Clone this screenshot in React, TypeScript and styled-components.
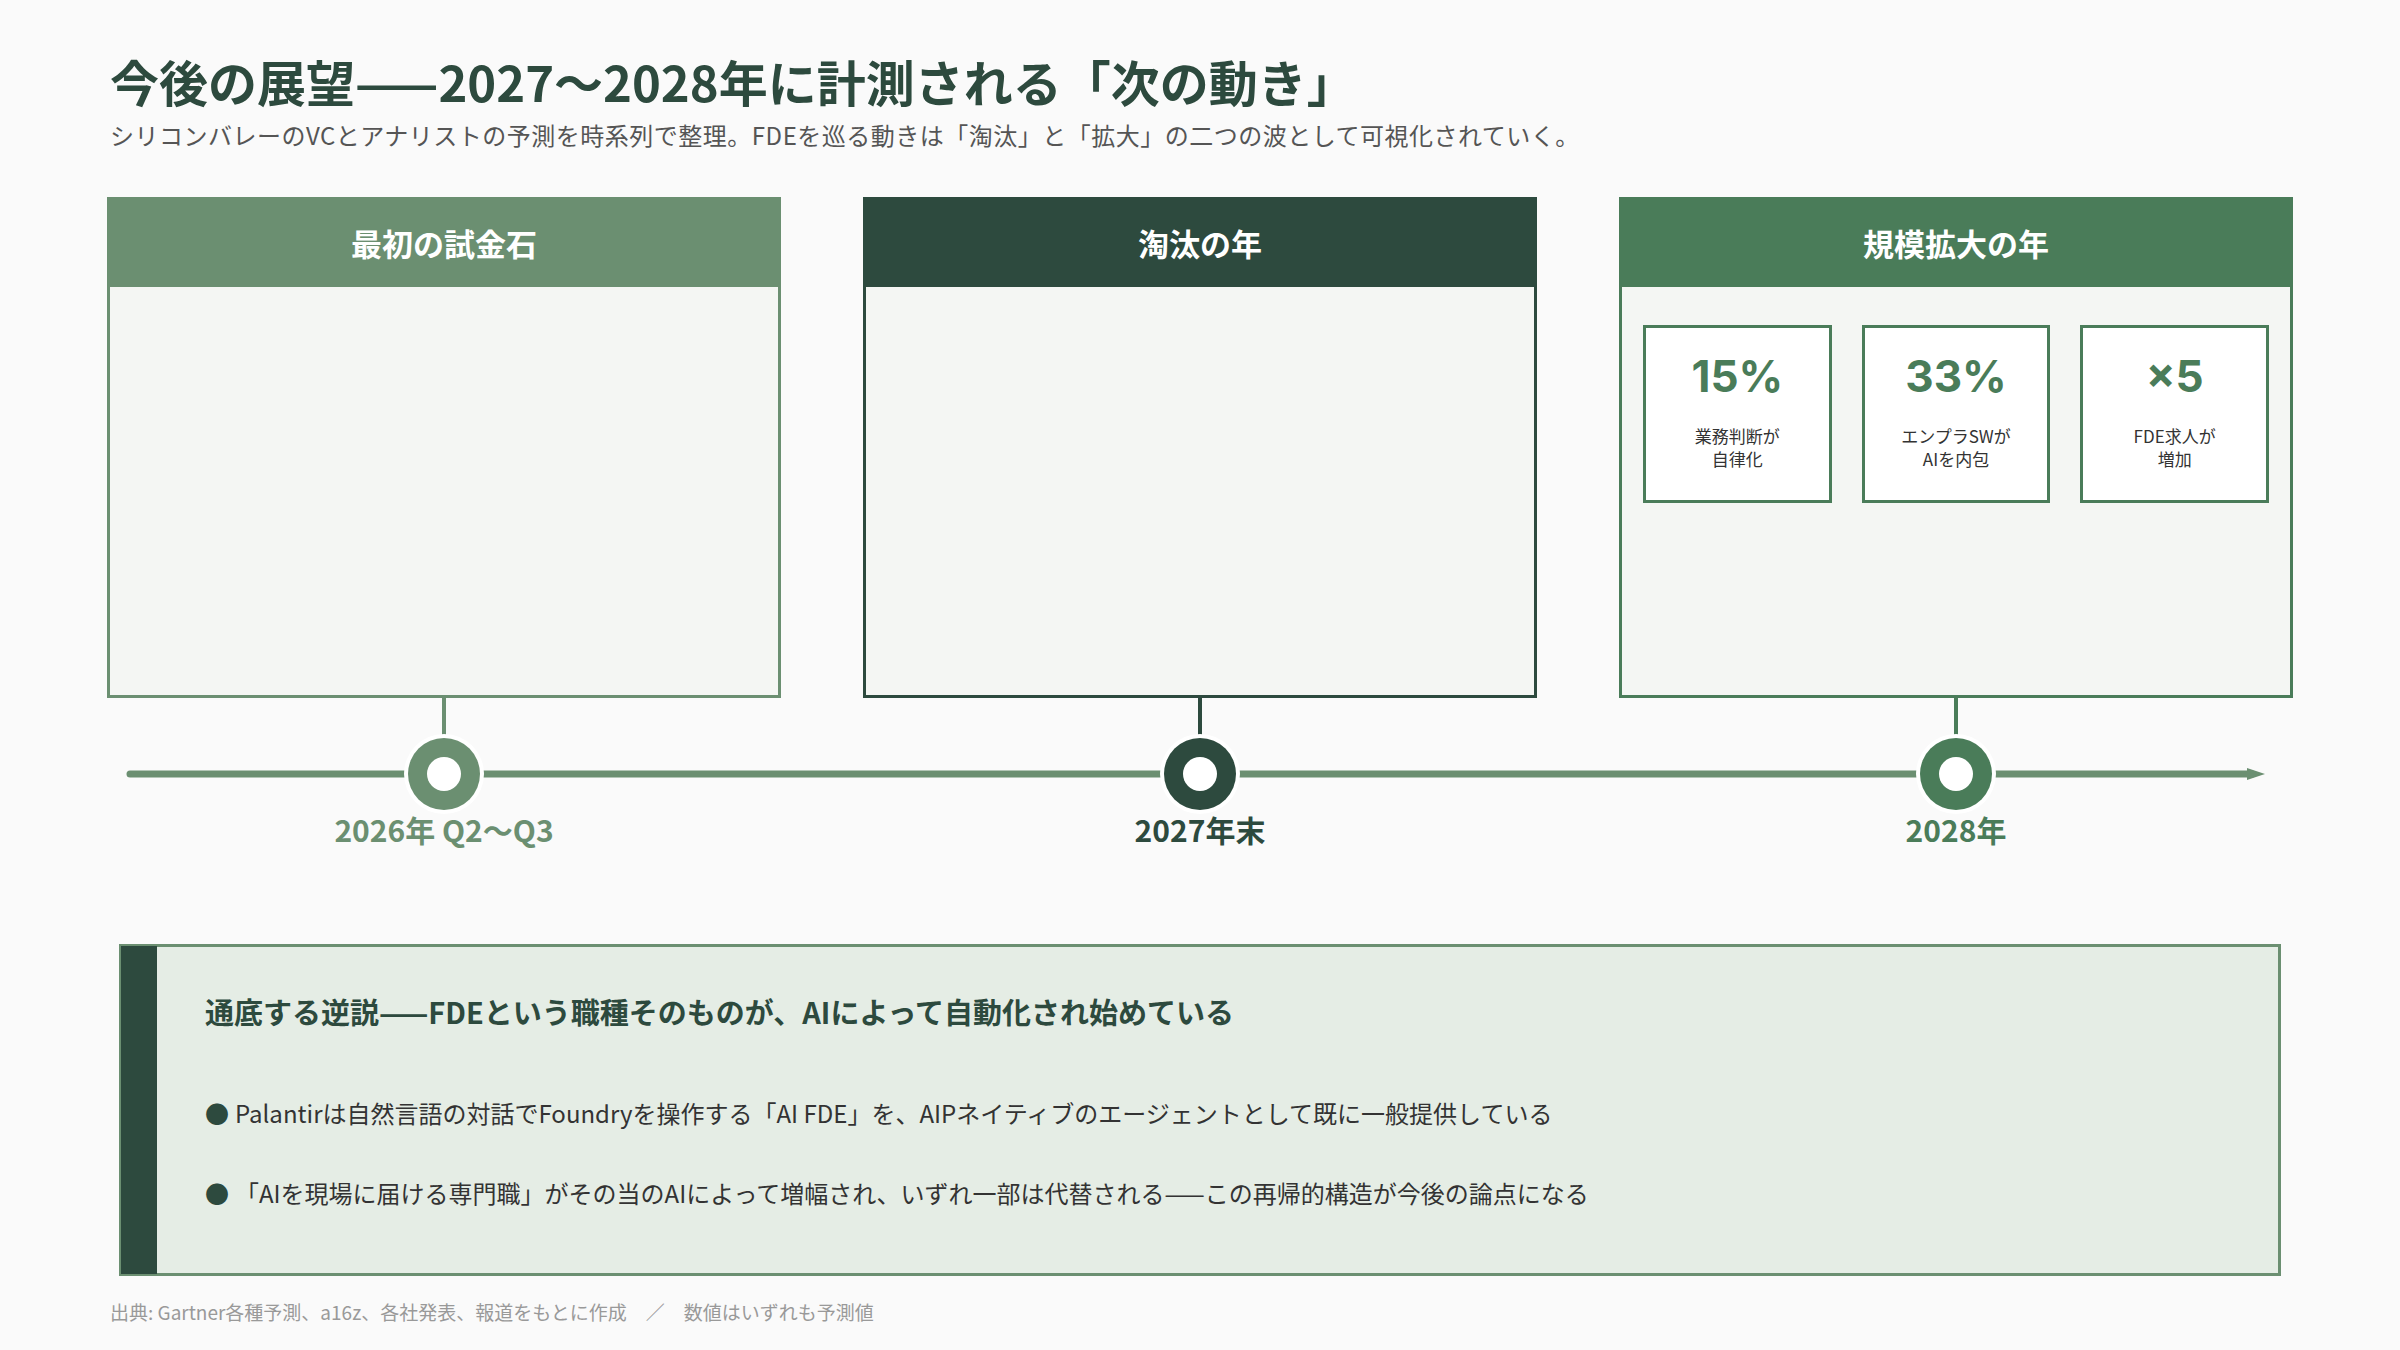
import React from "react";
import styled, { createGlobalStyle } from "styled-components";

const Global = createGlobalStyle`
  html, body { margin: 0; padding: 0; background: #fafafa; }
  body { font-family: "Noto Sans CJK JP", "Noto Sans", sans-serif; }
`;

const Page = styled.div`
  width: 2400px; height: 1350px; box-sizing: border-box;
  padding: 50px 107px 0 107px; display: flex; flex-direction: column;
`;
const Title = styled.h1`
  margin: 0 0 0 3px; font-size: 49px; line-height: 62px; font-weight: 700; color: #2d4a3e; letter-spacing: 0px;
`;
const Sub = styled.p`
  margin: 6px 0 0 3px; font-size: 24px; line-height: 34px; color: #555; letter-spacing: 0.5px;
`;
const Cards = styled.div`
  margin-top: 45px; display: grid; grid-template-columns: repeat(3, 674px); column-gap: 82px;
`;
const Card = styled.div<{ c: string }>`
  height: 501px; border: 3px solid ${p => p.c}; background: #f4f6f3; box-sizing: border-box;
  display: flex; flex-direction: column;
`;
const CardHead = styled.div<{ c: string }>`
  background: ${p => p.c}; height: 90px; margin: -3px -3px 0 -3px; display: flex; align-items: center; justify-content: center;
  color: #fff; font-size: 31px; font-weight: 700;
`;
const Stats = styled.div`
  display: grid; grid-template-columns: repeat(3, 1fr); gap: 30px; padding: 38px 21px 0 21px;
`;
const Stat = styled.div`
  height: 178px; background: #fff; border: 3px solid #4a7c59; box-sizing: border-box;
  display: flex; flex-direction: column; align-items: center; padding-top: 22px;
`;
const StatNum = styled.div`
  font-size: 44px; font-weight: 700; color: #4a7c59; line-height: 52px; font-family: "Inter", "Noto Sans CJK JP", sans-serif;
`;
const StatLabel = styled.div`
  margin-top: 22px; font-size: 17px; line-height: 23px; color: #333; text-align: center;
`;
const Timeline = styled.div`
  position: relative; display: grid; grid-template-columns: repeat(3, 674px); column-gap: 82px;
`;
const Line = styled.svg`
  position: absolute; left: 0; top: 0; width: 2186px; height: 150px; pointer-events: none;
`;
const Col = styled.div`
  position: relative; display: flex; flex-direction: column; align-items: center;
`;
const Stem = styled.div<{ c: string }>`
  width: 4px; height: 40px; background: ${p => p.c};
`;
const Dot = styled.div<{ c: string }>`
  width: 72px; height: 72px; border-radius: 50%; background: ${p => p.c}; box-sizing: border-box;
  box-shadow: 0 0 0 4px #fff; display: flex; align-items: center; justify-content: center;
  &::after { content: ""; width: 34px; height: 34px; border-radius: 50%; background: #fff; }
`;
const DateLabel = styled.div<{ c: string }>`
  margin-top: 0px; font-size: 30px; font-weight: 700; color: ${p => p.c}; line-height: 38px;
`;
const Note = styled.div`
  margin: 96px 12px 0 12px; height: 332px; border: 3px solid #6b8f71; background: #e5ede5; box-sizing: border-box;
  display: flex;
`;
const NoteBar = styled.div`
  width: 36px; background: #2d4a3e; margin: -1px 0 -1px -1px;
`;
const NoteBody = styled.div`
  padding: 44px 0 0 48px; display: flex; flex-direction: column;
`;
const NoteHead = styled.div`
  font-size: 29px; font-weight: 700; color: #2d4a3e; line-height: 40px;
`;
const Bullet = styled.div<{ first?: boolean }>`
  margin-top: ${p => (p.first ? 62 : 40)}px; font-size: 24px; color: #333; line-height: 40px;
  &::before { content: "●"; color: #2d4a3e; margin-right: 6px; }
`;
const Foot = styled.div`
  margin: 22px 0 0 3px; font-size: 19px; color: #999;
`;

const G1 = "#6b8f71", G2 = "#2d4a3e", G3 = "#4a7c59";

export default function App() {
  return (
    <Page>
      <Global />
      <Title>今後の展望——2027〜2028年に計測される「次の動き」</Title>
      <Sub>シリコンバレーのVCとアナリストの予測を時系列で整理。FDEを巡る動きは「淘汰」と「拡大」の二つの波として可視化されていく。</Sub>
      <Cards>
        <Card c={G1}><CardHead c={G1}>最初の試金石</CardHead></Card>
        <Card c={G2}><CardHead c={G2}>淘汰の年</CardHead></Card>
        <Card c={G3}>
          <CardHead c={G3}>規模拡大の年</CardHead>
          <Stats>
            <Stat><StatNum>15%</StatNum><StatLabel>業務判断が<br />自律化</StatLabel></Stat>
            <Stat><StatNum>33%</StatNum><StatLabel>エンプラSWが<br />AIを内包</StatLabel></Stat>
            <Stat><StatNum>×5</StatNum><StatLabel>FDE求人が<br />増加</StatLabel></Stat>
          </Stats>
        </Card>
      </Cards>
      <Timeline>
        <Line viewBox="0 0 2186 150">
          <line x1="23" y1="76" x2="2145" y2="76" stroke={G1} strokeWidth="7" strokeLinecap="round" />
          <polygon points="2140,70 2158,76 2140,82" fill={G1} />
        </Line>
        <Col><Stem c={G1} /><Dot c={G1} /><DateLabel c={G1}>2026年 Q2〜Q3</DateLabel></Col>
        <Col><Stem c={G2} /><Dot c={G2} /><DateLabel c={G2}>2027年末</DateLabel></Col>
        <Col><Stem c={G3} /><Dot c={G3} /><DateLabel c={G3}>2028年</DateLabel></Col>
      </Timeline>
      <Note>
        <NoteBar />
        <NoteBody>
          <NoteHead>通底する逆説——FDEという職種そのものが、AIによって自動化され始めている</NoteHead>
          <Bullet first>Palantirは自然言語の対話でFoundryを操作する「AI FDE」を、AIPネイティブのエージェントとして既に一般提供している</Bullet>
          <Bullet>「AIを現場に届ける専門職」がその当のAIによって増幅され、いずれ一部は代替される——この再帰的構造が今後の論点になる</Bullet>
        </NoteBody>
      </Note>
      <Foot>出典: Gartner各種予測、a16z、各社発表、報道をもとに作成　／　数値はいずれも予測値</Foot>
    </Page>
  );
}
